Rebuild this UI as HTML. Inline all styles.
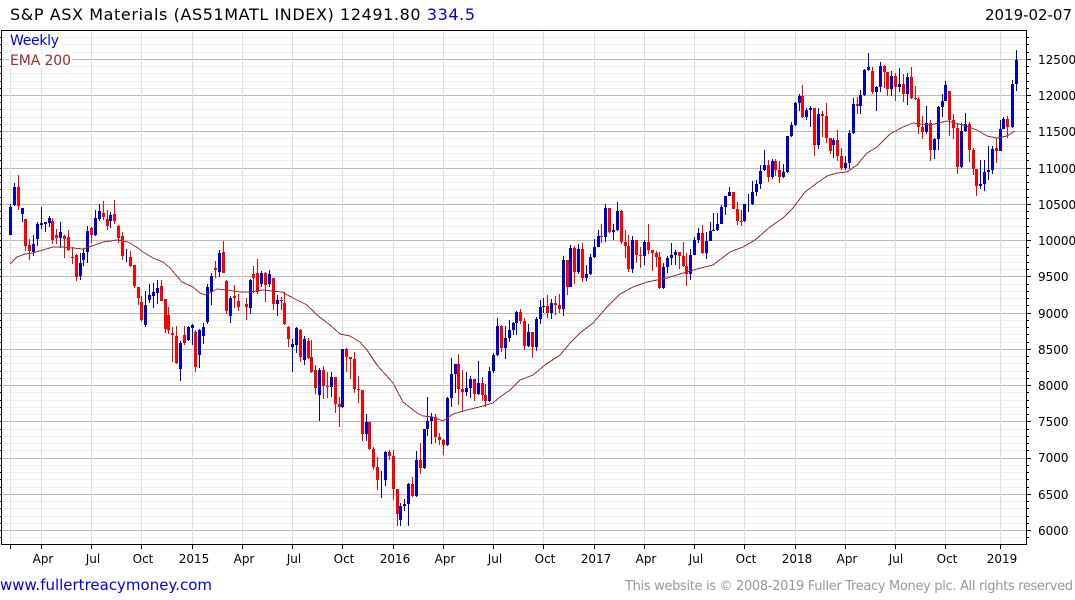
<!DOCTYPE html>
<html><head><meta charset="utf-8"><title>S&amp;P ASX Materials</title>
<style>html,body{margin:0;padding:0;background:#fff;width:1075px;height:600px;overflow:hidden}svg{display:block}text{font-family:"DejaVu Sans",sans-serif}</style></head>
<body>
<svg width="1075" height="600" viewBox="0 0 1075 600" xmlns="http://www.w3.org/2000/svg">
<rect width="1075" height="600" fill="#fff"/>
<g shape-rendering="crispEdges" transform="translate(0,.5)">
<path stroke="#eee" fill="none" d="M2 37H1026M2 44H1026M2 52H1026M2 66H1026M2 73H1026M2 81H1026M2 88H1026M2 102H1026M2 109H1026M2 117H1026M2 124H1026M2 138H1026M2 146H1026M2 153H1026M2 160H1026M2 175H1026M2 182H1026M2 189H1026M2 197H1026M2 211H1026M2 218H1026M2 226H1026M2 233H1026M2 247H1026M2 255H1026M2 262H1026M2 269H1026M2 284H1026M2 291H1026M2 298H1026M2 305H1026M2 320H1026M2 327H1026M2 334H1026M2 342H1026M2 356H1026M2 363H1026M2 371H1026M2 378H1026M2 392H1026M2 400H1026M2 407H1026M2 414H1026M2 429H1026M2 436H1026M2 443H1026M2 450H1026M2 465H1026M2 472H1026M2 479H1026M2 487H1026M2 501H1026M2 508H1026M2 516H1026M2 523H1026M2 537H1026"/>
<path stroke="#bbb" fill="none" d="M2 59H1026M2 95H1026M2 131H1026M2 168H1026M2 204H1026M2 240H1026M2 276H1026M2 313H1026M2 349H1026M2 385H1026M2 421H1026M2 458H1026M2 494H1026M2 530H1026"/>
</g>
<g shape-rendering="crispEdges" transform="translate(.5,0)">
<path stroke="#ddd" fill="none" d="M10 31V544M41 31V544M91 31V544M141 31V544M192 31V544M242 31V544M292 31V544M342 31V544M393 31V544M443 31V544M493 31V544M543 31V544M594 31V544M644 31V544M694 31V544M744 31V544M795 31V544M845 31V544M895 31V544M945 31V544M1000 31V544"/>
</g>
<rect x="9" y="32" width="52" height="17" fill="#fff"/>
<rect x="9" y="52" width="63" height="16" fill="#fff"/>
<g shape-rendering="crispEdges" transform="translate(.5,0)" fill="none">
<path stroke="#0000cc" d="M10 204V235M14 183V206M22 208V222M33 235V256M37 222V246M41 207V229M45 222V232M49 216V227M60 222V248M80 253V280M83 248V266M87 226V263M95 210V236M99 204V221M110 212V228M126 249V262M145 291V327M149 284V303M153 283V308M157 280V304M180 341V381M188 326V341M192 324V345M199 329V368M203 323V344M207 284V324M211 273V305M219 250V277M230 296V323M250 279V314M261 271V287M269 270V287M277 295V316M292 339V372M296 327V353M304 336V365M319 368V421M331 372V397M342 349V408M366 414V441M381 471V498M385 451V486M400 503V526M404 499V511M408 483V526M416 451V497M424 429V469M427 397V436M431 413V444M447 397V446M451 358V407M455 364V393M466 372V396M470 376V398M478 361V395M489 367V402M493 353V373M497 318V356M505 326V359M509 320V342M513 322V335M516 311V335M528 324V347M536 317V351M540 300V324M543 298V313M551 299V319M563 256V316M570 245V287M578 244V274M586 265V281M590 254V275M594 239V258M598 230V247M605 204V242M613 224V240M617 202V231M632 236V273M644 240V265M663 263V289M667 256V273M671 243V265M675 250V265M690 249V280M694 237V255M698 228V243M706 232V259M710 222V241M713 213V231M717 213V231M721 205V224M725 196V215M729 187V196M744 204V222M748 194V212M752 181V205M756 180V196M760 165V189M764 150V171M772 159V179M783 164V178M787 136V173M791 122V137M795 102V126M799 94V111M806 108V120M810 106V127M818 108V149M833 138V158M845 156V170M849 130V169M853 98V134M860 90V114M864 69V96M868 53V71M876 86V111M880 62V92M891 71V96M899 68V92M907 73V105M926 106V134M934 138V159M938 106V150M942 94V117M945 81V101M961 123V168M965 113V132M980 160V189M984 160V191M988 146V180M992 146V174M1000 120V151M1003 117V129M1012 80V128M1016 50V91"/>
<path stroke="#0000cc" stroke-width="3" d="M10 207V235M14 187V205M22 208V214M33 244V252M37 224V239M41 223V225M45 222V224M49 218V223M60 232V238M80 263V276M83 253V260M87 231V252M95 218V235M99 211V219M110 215V221M145 305V325M149 295V300M153 292V296M157 288V293M180 343V369M188 327V340M192 325V328M199 330V355M203 327V336M207 287V322M211 276V292M219 253V272M230 298V316M250 280V308M261 273V284M269 274V284M277 300V304M292 344V347M296 328V345M304 339V360M319 370V395M331 377V387M342 349V407M366 422V434M385 452V480M400 506V520M404 504V506M408 484V504M416 460V496M424 429V468M427 421V429M431 417V421M447 398V445M451 374V398M455 364V374M466 388V392M470 379V388M478 383V394M489 371V401M493 355V371M497 326V355M505 338V348M509 330V338M513 323V330M516 312V323M528 332V346M536 319V347M540 307V319M543 306V307M551 303V313M563 260V309M570 248V287M578 249V272M586 274V278M590 257V274M594 247V257M598 236V247M605 208V237M613 230V232M617 211V230M632 240V269M644 242V256M663 267V288M667 258V267M671 255V258M675 252V255M690 255V274M694 240V255M698 233V240M706 241V253M710 231V241M713 230V231M717 224V230M721 207V224M725 196V207M729 192V196M744 204V221M752 192V204M756 184V192M760 171V184M764 165V170M772 161V177M783 172V177M787 136V172M791 125V136M795 103V125M799 96V103M806 110V117M810 108V110M818 114V145M833 140V145M845 163V168M849 133V163M853 104V133M860 95V106M864 70V95M868 67V70M876 87V92M880 66V87M891 76V89M899 84V87M907 77V94M926 123V132M934 139V150M938 107V139M942 101V107M945 85V101M961 131V167M965 124V131M980 184V186M984 172V184M988 170V172M992 149V170M1000 129V151M1003 119V129M1012 84V127M1016 60V84"/>
<path stroke="#ff0000" d="M18 175V210M25 219V251M29 239V260M52 218V244M56 229V244M64 235V258M68 230V251M72 247V264M76 254V281M91 227V243M103 201V220M107 210V230M114 200V224M118 225V243M122 232V260M130 251V267M134 265V288M138 287V305M141 296V322M161 280V301M165 299V333M168 307V334M172 327V362M176 326V364M184 326V345M195 330V372M215 261V278M223 241V273M226 280V314M234 285V308M238 294V311M246 298V320M253 266V293M257 259V294M265 272V302M273 278V310M281 297V310M284 292V325M288 326V347M300 329V362M308 338V359M311 340V373M315 365V394M323 366V399M327 372V398M335 377V413M339 397V427M346 348V372M350 357V379M354 352V393M358 376V403M362 390V441M369 422V450M373 447V470M377 457V490M389 450V460M393 450V500M397 489V526M412 477V497M420 443V474M435 414V443M439 433V445M443 439V455M458 354V405M462 370V412M474 379V401M482 377V401M485 384V407M501 325V352M520 309V324M524 318V350M532 332V358M547 295V318M555 296V315M559 294V313M567 260V295M574 246V284M582 243V282M601 224V243M609 208V233M621 210V244M625 230V258M628 235V272M636 240V263M640 247V268M648 224V254M652 250V271M656 251V267M659 252V289M679 252V269M683 242V267M686 253V286M702 225V254M733 192V209M737 202V225M741 210V226M768 160V182M775 159V176M779 161V183M802 85V118M814 108V156M822 111V137M826 103V143M830 138V154M837 130V161M841 148V170M857 97V114M872 67V94M884 65V88M887 72V96M895 73V101M903 74V102M911 67V99M915 86V100M918 97V134M922 116V139M930 120V161M949 91V136M953 114V139M957 124V174M969 122V162M973 148V175M976 169V196M996 138V163M1007 116V138"/>
<path stroke="#ff0000" stroke-width="3" d="M18 187V206M25 219V246M29 245V251M52 221V240M56 235V238M64 236V239M68 237V250M72 257V258M76 255V277M91 228V235M103 213V217M107 219V226M114 214V221M118 226V238M122 236V256M130 257V266M134 265V286M138 287V298M141 302V320M161 286V301M165 299V329M168 315V330M172 333V335M176 336V363M184 335V343M195 332V367M215 268V270M223 252V273M226 281V311M234 296V298M238 301V307M246 304V307M253 274V278M257 273V292M265 273V285M273 278V304M281 300V301M284 303V324M288 327V339M300 330V357M308 341V358M311 357V372M315 370V388M323 370V386M327 386V387M335 377V404M339 404V407M346 349V357M350 357V359M354 359V389M358 389V390M362 390V434M369 422V449M373 449V467M377 467V480M389 452V456M393 456V489M397 489V514M412 484V496M420 460V468M435 417V437M439 437V440M443 440V445M458 364V389M462 389V392M474 379V394M482 383V395M485 395V401M501 326V348M520 312V321M524 321V346M532 332V347M547 306V313M555 303V305M559 305V309M567 260V287M574 248V272M582 249V278M601 236V237M609 208V232M621 211V242M625 242V246M628 246V269M636 240V255M640 255V256M648 242V250M652 250V253M656 253V257M659 257V288M679 252V256M683 256V266M686 266V274M702 233V253M733 192V209M737 209V221M741 221V222M768 165V177M775 161V170M779 170V177M802 96V117M814 108V145M822 114V116M826 116V138M830 138V151M837 140V156M841 156V168M857 104V106M872 71V92M884 66V72M887 72V89M895 76V87M903 84V94M911 77V98M915 98V99M918 99V127M922 127V132M930 123V150M949 91V120M953 120V128M957 128V167M969 124V150M973 150V169M976 169V186M996 148V151M1007 119V127"/>
</g>
<polyline fill="none" stroke="#993030" stroke-width="1" shape-rendering="crispEdges" points="10,264 17,257 25,254 33,253 43,250 53,247 63,247 73,248 83,249 92,246 103,242 117,240 128,242 138,248 143,252 153,258 163,262 170,268 182,282 193,287 200,293 205,295 217,289 227,290 240,292 250,292 263,290 282,292 293,298 307,305 317,315 330,325 340,334 350,336 360,342 367,350 377,365 393,383 403,402 417,413 423,416 433,417 443,421 453,414 467,410 483,406 493,403 500,397 510,390 520,380 533,375 545,365 560,355 570,343 580,333 593,323 607,307 620,294 633,287 647,282 667,278 680,274 697,269 713,265 730,252 743,247 755,240 770,227 783,218 793,208 805,192 817,183 827,176 837,173 847,172 857,165 867,153 877,147 890,134 903,127 913,123 930,125 947,121 963,125 977,130 987,136 997,138 1007,136 1015,131"/>
<g shape-rendering="crispEdges" fill="none" stroke="#000">
<path d="M1 30.5H1026.5V544.5H1.5V30"/>
<g transform="translate(0,.5)">
<path d="M0 37H1M0 44H1M0 52H1M0 59H1M0 66H1M0 73H1M0 81H1M0 88H1M0 95H1M0 102H1M0 109H1M0 117H1M0 124H1M0 131H1M0 138H1M0 146H1M0 153H1M0 160H1M0 168H1M0 175H1M0 182H1M0 189H1M0 197H1M0 204H1M0 211H1M0 218H1M0 226H1M0 233H1M0 240H1M0 247H1M0 255H1M0 262H1M0 269H1M0 276H1M0 284H1M0 291H1M0 298H1M0 305H1M0 313H1M0 320H1M0 327H1M0 334H1M0 342H1M0 349H1M0 356H1M0 363H1M0 371H1M0 378H1M0 385H1M0 392H1M0 400H1M0 407H1M0 414H1M0 421H1M0 429H1M0 436H1M0 443H1M0 450H1M0 458H1M0 465H1M0 472H1M0 479H1M0 487H1M0 494H1M0 501H1M0 508H1M0 516H1M0 523H1M0 530H1M0 537H1"/>
<path d="M1027 37H1029M1027 44H1029M1027 52H1029M1027 66H1029M1027 73H1029M1027 81H1029M1027 88H1029M1027 102H1029M1027 109H1029M1027 117H1029M1027 124H1029M1027 138H1029M1027 146H1029M1027 153H1029M1027 160H1029M1027 175H1029M1027 182H1029M1027 189H1029M1027 197H1029M1027 211H1029M1027 218H1029M1027 226H1029M1027 233H1029M1027 247H1029M1027 255H1029M1027 262H1029M1027 269H1029M1027 284H1029M1027 291H1029M1027 298H1029M1027 305H1029M1027 320H1029M1027 327H1029M1027 334H1029M1027 342H1029M1027 356H1029M1027 363H1029M1027 371H1029M1027 378H1029M1027 392H1029M1027 400H1029M1027 407H1029M1027 414H1029M1027 429H1029M1027 436H1029M1027 443H1029M1027 450H1029M1027 465H1029M1027 472H1029M1027 479H1029M1027 487H1029M1027 501H1029M1027 508H1029M1027 516H1029M1027 523H1029M1027 537H1029"/>
<path d="M1027 59H1031M1027 95H1031M1027 131H1031M1027 168H1031M1027 204H1031M1027 240H1031M1027 276H1031M1027 313H1031M1027 349H1031M1027 385H1031M1027 421H1031M1027 458H1031M1027 494H1031M1027 530H1031"/>
</g>
<path transform="translate(.5,0)" d="M10 545V549M41 545V549M91 545V549M141 545V549M192 545V549M242 545V549M292 545V549M342 545V549M393 545V549M443 545V549M493 545V549M543 545V549M594 545V549M644 545V549M694 545V549M744 545V549M795 545V549M845 545V549M895 545V549M945 545V549M1000 545V549"/>
</g>
<text x="10" y="20" font-size="16" fill="#000" textLength="465" xml:space="preserve">S&amp;P ASX Materials (AS51MATL INDEX) 12491.80 <tspan fill="#0000ee">334.5</tspan></text>
<text x="985" y="20" font-size="15" fill="#000" textLength="87">2019-02-07</text>
<text x="10" y="45" font-size="14" fill="#0000ee" textLength="49">Weekly</text>
<text x="10" y="65" font-size="14" fill="#a52a2a" textLength="61">EMA 200</text>
<g font-size="12" fill="#000">
<text x="1038" y="64">12500</text><text x="1038" y="100">12000</text><text x="1038" y="136">11500</text><text x="1038" y="173">11000</text><text x="1038" y="209">10500</text><text x="1038" y="245">10000</text>
<text x="1038" y="281">9500</text><text x="1038" y="318">9000</text><text x="1038" y="354">8500</text><text x="1038" y="390">8000</text><text x="1038" y="426">7500</text><text x="1038" y="462">7000</text><text x="1038" y="499">6500</text><text x="1038" y="535">6000</text>
</g>
<g font-size="12" fill="#000" text-anchor="middle">
<text x="43" y="563">Apr</text><text x="93" y="563">Jul</text><text x="143" y="563">Oct</text><text x="194" y="563">2015</text><text x="244" y="563">Apr</text><text x="294" y="563">Jul</text><text x="344" y="563">Oct</text><text x="395" y="563">2016</text><text x="445" y="563">Apr</text><text x="495" y="563">Jul</text><text x="545" y="563">Oct</text><text x="596" y="563">2017</text><text x="646" y="563">Apr</text><text x="696" y="563">Jul</text><text x="746" y="563">Oct</text><text x="797" y="563">2018</text><text x="847" y="563">Apr</text><text x="896" y="563">Jul</text><text x="947" y="563">Oct</text><text x="1002" y="563">2019</text>
</g>
<text x="0" y="590" font-size="15" fill="#0000ee" textLength="212">www.fullertreacymoney.com</text>
<text x="625" y="590" font-size="13" fill="#999" textLength="448">This website is © 2008-2019 Fuller Treacy Money plc. All rights reserved</text>
</svg>
</body></html>
